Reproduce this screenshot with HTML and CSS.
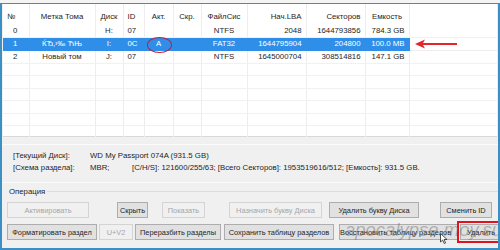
FILE: index.html
```html
<!DOCTYPE html>
<html lang="ru">
<head>
  <meta charset="UTF-8" />
  <title>Partition</title>
  <link rel="stylesheet" href="styles.css">
</head>
<body>
  <main class="window">
    <div class="grid">
      <table>
        <colgroup>
          <col class="c-num"><col class="c-label"><col class="c-disk"><col class="c-id"><col class="c-act">
          <col class="c-hid"><col class="c-fs"><col class="c-lba"><col class="c-sec"><col class="c-size"><col>
        </colgroup>
        <thead>
          <tr>
            <th class="num">№</th><th>Метка Тома</th><th>Диск</th><th class="left">ID</th><th>Акт.</th>
            <th>Скр.</th><th>ФайлСис</th><th class="right">Нач.LBA</th><th class="right">Секторов</th><th>Емкость</th><th></th>
          </tr>
        </thead>
        <tbody>
          <tr>
            <td class="idx">0</td><td></td><td>H:</td><td class="left">07</td><td></td>
            <td></td><td>NTFS</td><td class="right">2048</td><td class="right">1644793856</td><td class="right">784.3 GB</td><td></td>
          </tr>
          <tr class="selected">
            <td class="idx">1</td><td>ЌЂ‚›‰ ЋЊ</td><td>I:</td><td class="left">0C</td><td class="mark">A</td>
            <td></td><td>FAT32</td><td class="right">1644795904</td><td class="right">204800</td><td class="right">100.0 MB</td><td class="blank"></td>
          </tr>
          <tr>
            <td class="idx">2</td><td>Новый том</td><td>J:</td><td class="left">07</td><td></td>
            <td></td><td>NTFS</td><td class="right">1645000704</td><td class="right">308514816</td><td class="right">147.1 GB</td><td></td>
          </tr>
          <tr><td></td><td></td><td></td><td></td><td></td><td></td><td></td><td></td><td></td><td></td><td></td></tr>
          <tr><td></td><td></td><td></td><td></td><td></td><td></td><td></td><td></td><td></td><td></td><td></td></tr>
          <tr><td></td><td></td><td></td><td></td><td></td><td></td><td></td><td></td><td></td><td></td><td></td></tr>
          <tr><td></td><td></td><td></td><td></td><td></td><td></td><td></td><td></td><td></td><td></td><td></td></tr>
          <tr><td></td><td></td><td></td><td></td><td></td><td></td><td></td><td></td><td></td><td></td><td></td></tr>
          <tr><td></td><td></td><td></td><td></td><td></td><td></td><td></td><td></td><td></td><td></td><td></td></tr>
        </tbody>
      </table>
      <svg class="arrow" width="46" height="12" viewBox="0 0 46 12">
        <path d="M2 6 L12 1.5 L10 5 L44 5 L44 7 L10 7 L12 10.5 Z" fill="#e3262b"/>
      </svg>
    </div>

    <section class="info">
      <div class="info-row"><span class="key">[Текущий Диск]:</span><span>WD My Passport 074A (931.5 GB)</span></div>
      <div class="info-row"><span class="key">[Схема раздела]:</span><span class="mbr">MBR;</span><span>[C/H/S]: 121600/255/63; [Всего Секторов]: 1953519616/512; [Емкость]: 931.5 GB.</span></div>
    </section>

    <section class="ops">
      <div class="ops-title">Операция</div>
      <div class="btn-row">
        <button class="btn off w-activate" disabled>Активировать</button>
        <button class="btn w-hide">Скрыть</button>
        <button class="btn off w-show" disabled>Показать</button>
        <button class="btn off w-assign" disabled>Назначить букву Диска</button>
        <button class="btn w-unassign">Удалить букву Диска</button>
        <button class="btn w-id">Сменить ID</button>
      </div>
      <div class="btn-row">
        <button class="btn w-format">Форматировать раздел</button>
        <button class="btn off w-uv" disabled>U+V2</button>
        <button class="btn w-repart">Переразбить разделы</button>
        <button class="btn w-save">Сохранить таблицу разделов</button>
        <button class="btn w-restore">Восстановить таблицу разделов</button>
        <button class="btn w-delete">Удалить</button>
      </div>
      <span class="watermark">apocalypse.moy.su</span>
      <svg class="cursor" width="8" height="11" viewBox="0 0 8 11">
        <path d="M0.5 0.5 L0.5 9 L2.6 7 L4.2 10.5 L5.6 9.9 L4.1 6.5 L7 6.5 Z" fill="#fff" stroke="#222" stroke-width="0.8"/>
      </svg>
    </section>
  </main>
</body>
</html>
```

FILE: styles.css
```css
* { box-sizing: border-box; }
body {
  margin: 0;
  background: #f4f4f4;
  font-family: "Liberation Sans", Arial, sans-serif;
  font-size: 7.8px;
  color: #1e1e1e;
}
.window {
  margin-top: 3px;
  height: 247px;
  border: 2px solid #3c8fc5;
  border-top-width: 1px;
  background: #f0f0f0;
  display: flex;
  flex-direction: column;
  overflow: hidden;
}

/* partition list */
.grid {
  position: relative;
  margin-left: 1px;
  height: 133px;
  background: #fff;
  border-bottom: 1px solid #d8d8d8;
}
table {
  border-collapse: collapse;
  table-layout: fixed;
  width: 100%;
}
.c-num { width: 26px; }
.c-label { width: 66px; }
.c-disk { width: 28px; }
.c-id { width: 21px; }
.c-act { width: 29px; }
.c-hid { width: 28px; }
.c-fs { width: 46px; }
.c-lba { width: 59px; }
.c-sec { width: 59px; }
.c-size { width: 44px; }
th, td {
  border-right: 1px solid #ededed;
  padding: 0 4px;
  text-align: center;
  white-space: nowrap;
  overflow: visible;
  font-weight: normal;
}
th {
  height: 21px;
  padding-top: 3px;
}
td {
  height: 12.4px;
  line-height: 12px;
  border-bottom: 1px solid #f1f1f1;
}
th.num { text-align: left; padding-left: 4px; }
td.idx { text-align: left; padding-left: 10px; }
.left { text-align: left; }
.right { text-align: right; }
tr.selected td { background: #2f8fe8; color: #fff; border-color: #2f8fe8; }
tr.selected td.blank { background: #fff; border-color: #ededed; }
td.mark { position: relative; }
td.mark::after {
  content: "";
  position: absolute;
  left: 2px;
  top: -1px;
  width: 23px;
  height: 14px;
  border: 1.5px solid #c21d3e;
  border-radius: 50%;
}
.arrow { position: absolute; left: 410px; top: 34px; }

/* disk info */
.info {
  margin-top: 7px;
  padding: 5px 0 8px 11px;
  border-top: 1px solid #fbfbfb;
  border-bottom: 1px solid #fbfbfb;
}
.info-row { display: flex; line-height: 12px; }
.key { width: 77px; }
.mbr { width: 42px; }

/* operations */
.ops { position: relative; padding: 3px 0 0 2px; }
.ops-title {
  display: flex;
  align-items: center;
  gap: 2px;
  padding-left: 5px;
  line-height: 11px;
}
.ops-title::after {
  content: "";
  flex: 1;
  border-top: 1px solid #dcdcdc;
}
.btn-row {
  display: flex;
  margin-top: 5px;
}
.btn-row + .btn-row { margin-top: 6px; }
.btn {
  height: 16px;
  padding: 0 1px;
  font: inherit;
  font-size: 7.4px;
  color: #1e1e1e;
  background: #e1e1e1;
  border: 1px solid #adadad;
  white-space: nowrap;
  overflow: hidden;
  flex: none;
}
.btn.off { color: #a6a6a6; background: #f0f0f0; border-color: #d4d4d4; }
.w-activate { width: 82px; margin-left: 3px; }
.w-hide { width: 31px; margin-left: 28px; }
.w-show { width: 43px; margin-left: 14px; }
.w-assign { width: 93px; margin-left: 24px; }
.w-unassign { width: 90px; margin-left: 7px; }
.w-id { width: 52px; margin-left: 21px; }
.w-format { width: 90px; margin-left: 3px; }
.w-uv { width: 34px; margin-left: 2px; }
.w-repart { width: 86px; margin-left: 2px; }
.w-save { width: 110px; margin-left: 3px; }
.w-restore { width: 120px; margin-left: 5px; padding: 0; text-align: left; }
.w-delete { width: 42px; margin-left: 1px; outline: 2px solid #e0141e; outline-offset: 1px; }
.watermark {
  position: absolute;
  left: 343px;
  top: 36px;
  font-size: 18.5px;
  font-style: italic;
  color: rgba(110, 110, 110, 0.45);
  pointer-events: none;
}
.cursor { position: absolute; left: 438px; top: 50px; }
```
